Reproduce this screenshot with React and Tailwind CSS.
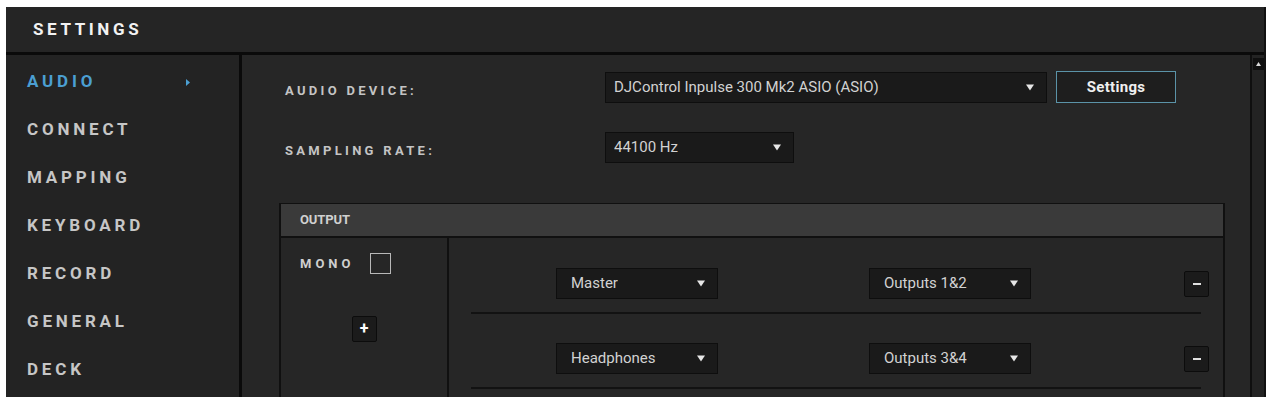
import React from 'react';

const navItems = ['AUDIO', 'CONNECT', 'MAPPING', 'KEYBOARD', 'RECORD', 'GENERAL', 'DECK'];

const outputRows = [
  { channel: 'Master', target: 'Outputs 1&2' },
  { channel: 'Headphones', target: 'Outputs 3&4' },
];

function Caret() {
  return (
    <svg width="8" height="7" viewBox="0 0 8 7" className="shrink-0">
      <path d="M0 0.5 H8 L4 6.5 Z" fill="#e6e6e6" />
    </svg>
  );
}

function Select({ value, className }) {
  return (
    <div
      className={`flex items-center justify-between bg-[#1a1a1a] border border-[#0e0e0e] pr-[12px] text-[15px] text-[#d2d2d2] ${className}`}
    >
      <span className="truncate">{value}</span>
      <Caret />
    </div>
  );
}

function SquareButton({ children }) {
  return (
    <button className="flex items-center justify-center w-[25px] h-[26px] bg-[#1b1b1b] border border-[#0c0c0c] rounded-[2px]">
      {children}
    </button>
  );
}

export default function App() {
  return (
    <div className="w-[1270px] h-[401px] bg-white pl-[6px] pt-[7px] font-['Roboto',sans-serif]">
      <div className="w-[1260px] h-[390px] bg-[#242424] border-r-2 border-[#111] flex flex-col overflow-hidden">
        {/* Header */}
        <div className="h-[48px] shrink-0 border-b-[3px] border-[#0a0a0a] bg-[#252525] flex items-center pl-[27px]">
          <h1 className="text-[17px] font-bold tracking-[3.6px] text-[#f2f2f2]">SETTINGS</h1>
        </div>

        <div className="flex flex-1 min-h-0">
          {/* Sidebar */}
          <aside className="w-[236px] shrink-0 border-r-[3px] border-[#0a0a0a] bg-[#232323] pt-[3px]">
            {navItems.map((item, i) => (
              <div key={item} className="h-[48px] flex items-center pl-[21px] pr-[49px]">
                <span
                  className={`text-[17px] font-bold tracking-[3.8px] ${i === 0 ? 'text-[#4b9fd2]' : 'text-[#c6c6c6]'}`}
                >
                  {item}
                </span>
                {i === 0 && (
                  <svg width="4" height="7" viewBox="0 0 4 7" className="ml-auto">
                    <path d="M0 0 L4 3.5 L0 7 Z" fill="#4b9fd2" />
                  </svg>
                )}
              </div>
            ))}
          </aside>

          {/* Main content */}
          <main className="flex-1 flex min-w-0 bg-[#262626]">
            <div className="flex-1 min-w-0 pl-[43px]">
              <div className="flex items-center mt-[16px] h-[32px]">
                <div className="w-[320px] pt-[7px] text-[13px] font-bold tracking-[3.3px] text-[#c4c4c4]">AUDIO DEVICE:</div>
                <Select value="DJControl Inpulse 300 Mk2 ASIO (ASIO)" className="w-[442px] h-[31px] pl-[8px]" />
                <button className="ml-[9px] w-[120px] h-[32px] bg-[#1e1e1e] border border-[#5b93a8] text-[15px] font-bold tracking-[0.3px] text-[#efefef]">
                  Settings
                </button>
              </div>

              <div className="flex items-center mt-[29px] h-[31px]">
                <div className="w-[320px] pt-[7px] text-[13px] font-bold tracking-[3.3px] text-[#c4c4c4]">SAMPLING RATE:</div>
                <Select value="44100 Hz" className="w-[189px] h-[31px] pl-[8px]" />
              </div>

              {/* Output panel */}
              <section className="mt-[40px] ml-[-6px] w-[946px] border-x-2 border-t border-[#101010]">
                <div className="h-[34px] bg-[#3a3a3a] border-b-2 border-[#101010] flex items-center pl-[19px]">
                  <span className="text-[13px] font-bold tracking-[-0.1px] text-[#d0d0d0]">OUTPUT</span>
                </div>
                <div className="flex h-[200px]">
                  <div className="w-[168px] shrink-0 border-r-2 border-[#101010] flex flex-col">
                    <div className="flex items-center mt-[15px] h-[21px] pl-[19px]">
                      <span className="text-[13px] font-bold tracking-[4px] text-[#cfcfcf]">MONO</span>
                      <span className="ml-[16px] w-[21px] h-[21px] border border-[#b8b8b8]" />
                    </div>
                    <div className="mt-[42px] flex justify-center">
                      <SquareButton>
                        <span className="text-[16px] font-bold leading-none text-white">+</span>
                      </SquareButton>
                    </div>
                  </div>

                  <div className="flex-1 min-w-0">
                    {outputRows.map((row, i) => (
                      <div key={row.channel}>
                        <div
                          className={`flex items-center pb-[13px] pl-[107px] pr-[14px] ${i === 0 ? 'pt-[30px]' : 'pt-[29px]'}`}
                        >
                          <Select value={row.channel} className="w-[162px] h-[31px] pl-[14px]" />
                          <Select value={row.target} className="ml-[151px] w-[162px] h-[31px] pl-[14px]" />
                          <div className="ml-auto">
                            <SquareButton>
                              <span className="w-[8px] h-[2px] bg-[#e0e0e0]" />
                            </SquareButton>
                          </div>
                        </div>
                        <div className="mx-[22px] h-[2px] bg-[#121212]" />
                      </div>
                    ))}
                  </div>
                </div>
              </section>
            </div>

            {/* Scrollbar */}
            <div className="w-[14px] shrink-0 border-l-2 border-[#0f0f0f] bg-[#232323] pt-[3px] flex flex-col items-center">
              <div className="w-[11px] h-[12px] bg-[#0f0f0f] flex items-center justify-center">
                <svg width="5" height="4" viewBox="0 0 5 4">
                  <path d="M0 4 L2.5 0 L5 4 Z" fill="#d8d8d8" />
                </svg>
              </div>
            </div>
          </main>
        </div>
      </div>
    </div>
  );
}
